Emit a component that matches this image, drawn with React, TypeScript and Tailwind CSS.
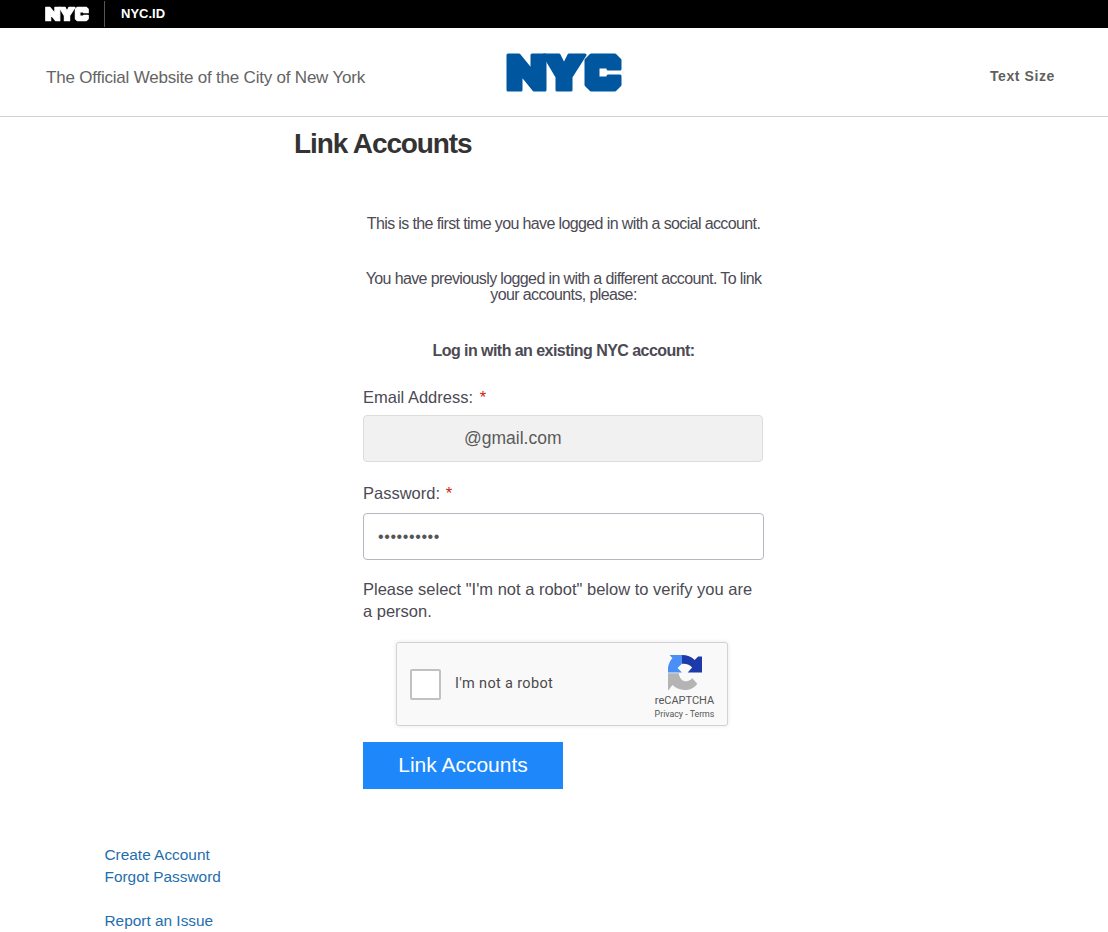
function NycLogo({ className, color }: { className: string; color: string }) {
  return (
    <svg viewBox="0 0 116 39" className={className} fill={color} stroke={color} strokeWidth="3" strokeLinejoin="round">
      <path d="M2 2H13L26 18V2H39V37H28L15 21V37H2Z" />
      <path d="M38 2H53L58 12L63 2H79L65 24V37H51V24Z" />
      <path d="M85 2H109L114 7V16H102V14H92V25H102V23H114V32L109 37H85L80 32V7Z" />
    </svg>
  );
}

function RecaptchaIcon() {
  return (
    <svg viewBox="0 0 107 100" preserveAspectRatio="none" className="w-[34px] h-[35px]">
      <path d="M44 0C60 0 74 5 84 14L95 4L107 4V50H62L76 36C70 28 58 24 44 25Z" fill="#1c3aa9" />
      <path d="M5 0H44V25L30 37L44 50H0V35C3 22 8 14 14 9Z" fill="#4a8ff5" />
      <path d="M0 52H34C36 68 46 75 56 75C66 75 72 72 76 66L92 82C84 94 68 100 52 100C36 100 24 94 14 86L2 100H0Z" fill="#b4b4b4" />
    </svg>
  );
}

export default function App() {
  return (
    <div className="w-[1108px] h-[932px] overflow-hidden bg-white text-[#4c4a54] font-['Liberation_Sans',Arial,sans-serif]">
      <div className="h-7 bg-black flex items-center">
        <NycLogo className="w-[44px] h-[16px] ml-[45px]" color="#ffffff" />
        <div className="w-px h-[26px] bg-[#555] ml-[15px]" />
        <span className="ml-4 text-white text-[13px] font-bold">NYC.ID</span>
      </div>

      <header className="h-[89px] border-b border-[#d0d0d0] relative flex items-center justify-between pt-[10px] pl-[46px] pr-[53px]">
        <span className="mt-[2px] text-[#646464] text-[17px] tracking-[-0.21px]">The Official Website of the City of New York</span>
        <NycLogo className="absolute left-[506px] top-[25px] w-[116px] h-[39px]" color="#00569f" />
        <span className="mb-[2px] text-[#5f5f5f] text-sm font-bold tracking-[0.6px]">Text Size</span>
      </header>

      <h1 className="ml-[294px] mt-[10px] text-[28px] leading-[34px] font-bold text-[#333] tracking-[-1.1px]">Link Accounts</h1>

      <main className="ml-[363px] w-[401px] mt-[54px]">
        <p className="text-center text-base leading-[18px] tracking-[-0.62px]">This is the first time you have logged in with a social account.</p>
        <p className="text-center text-base leading-4 tracking-[-0.62px] mt-[38px]">You have previously logged in with a different account. To link your accounts, please:</p>
        <p className="text-center text-base font-bold leading-[18px] tracking-[-0.55px] mt-[39px]">Log in with an existing NYC account:</p>

        <label className="block mt-[26px] text-[16.500px] leading-[22px]">Email Address: <span className="ml-[2px] text-[#d0200f]">*</span></label>
        <div className="mt-[7px] w-[400px] h-[47px] rounded border border-[#dcdcdc] bg-[#f1f1f1] flex items-center pl-[100px] text-[17.500px] text-[#5a5a5a]">@gmail.com</div>

        <label className="block mt-[20px] text-[16.500px] leading-[22px]">Password: <span className="ml-[1px] text-[#d0200f]">*</span></label>
        <div className="mt-[9px] h-[47px] rounded border border-[#b5b8c0] bg-white flex items-center pl-[14px] text-base text-[#555] tracking-[0.6px]">••••••••••</div>

        <p className="mt-[18px] text-[16.500px] leading-[22px]">Please select "I'm not a robot" below to verify you are a person.</p>

        <div className="ml-[33px] mt-[20px] w-[332px] h-[84px] rounded-[3px] border border-[#d3d3d3] bg-[#f9f9f9] shadow-[0_0_4px_rgba(0,0,0,0.1)] flex items-center pl-[13px] relative">
          <div className="w-[31px] h-[31px] rounded-[2px] border-2 border-[#c1c1c1] bg-white" />
          <span className="ml-[14px] text-[#4a4a4a] text-[14.500px] tracking-[0.35px] font-['Roboto',sans-serif]">I'm not a robot</span>
          <div className="absolute left-[251.500px] top-[12px] w-[72px] flex flex-col items-center text-[#555] font-['Roboto',sans-serif]">
            <RecaptchaIcon />
            <span className="text-[11px] leading-3 mt-[5px]">reCAPTCHA</span>
            <span className="text-[8.800px] leading-3 mt-px">Privacy - Terms</span>
          </div>
        </div>

        <button className="mt-[16px] pb-[2px] w-[200px] h-[47px] bg-[#1e88fb] text-white text-[21px] block">Link Accounts</button>
      </main>

      <nav className="ml-[104.500px] mt-[55px] flex flex-col text-[15.400px] leading-[22px] text-[#1f6ead]">
        <a>Create Account</a>
        <a>Forgot Password</a>
        <a className="mt-[22px]">Report an Issue</a>
      </nav>
    </div>
  );
}
